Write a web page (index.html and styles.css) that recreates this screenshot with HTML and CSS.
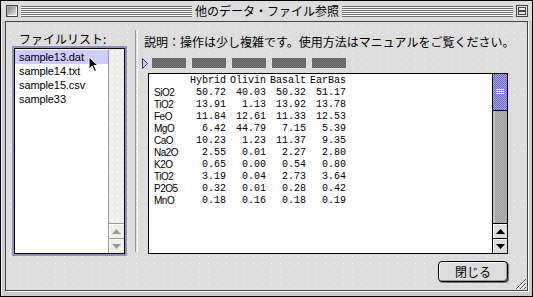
FILE: index.html
```html
<!DOCTYPE html>
<html lang="ja">
<head>
  <meta charset="UTF-8" />
  <title>他のデータ・ファイル参照</title>
  <link rel="stylesheet" href="styles.css">
</head>
<body>

<div class="window">
  <div class="titlebar">
    <span class="close-box"></span>
    <span class="stripes"></span>
    <span class="title">他のデータ・ファイル参照</span>
    <span class="stripes"></span>
    <svg class="shade-box" width="12" height="12" viewBox="0 0 12 12">
      <rect x="0.5" y="0.5" width="11" height="11" fill="#e8e8e8" stroke="#444"/>
      <rect x="2.5" y="2.5" width="7" height="3" fill="none" stroke="#444"/>
      <rect x="2.5" y="6.5" width="7" height="3" fill="none" stroke="#444"/>
    </svg>
  </div>

  <div class="content">
    <div class="main">
      <div class="files">
        <div class="label">ファイルリスト:</div>
        <div class="listbox">
          <ul class="file-list">
            <li class="selected">sample13.dat</li>
            <li>sample14.txt</li>
            <li>sample15.csv</li>
            <li>sample33</li>
          </ul>
          <div class="vscroll disabled">
            <div class="track"></div>
            <div class="arrow"><svg width="9" height="5" viewBox="0 0 9 5"><path d="M0 5 L4.5 0 L9 5 Z" fill="#999"/></svg></div>
            <div class="arrow"><svg width="9" height="5" viewBox="0 0 9 5"><path d="M0 0 L4.5 5 L9 0 Z" fill="#999"/></svg></div>
          </div>
        </div>
      </div>

      <div class="divider"></div>

      <div class="viewer">
        <p class="note">説明：操作は少し複雑です。使用方法はマニュアルをご覧ください。</p>
        <div class="col-bar">
          <svg class="marker" width="6" height="11" viewBox="0 0 6 11">
            <path d="M0.5 0.5 L5.5 5.5 L0.5 10.5 Z" fill="#ccccff" stroke="#333399"/>
          </svg>
          <span class="col-tab"></span>
          <span class="col-tab"></span>
          <span class="col-tab"></span>
          <span class="col-tab"></span>
          <span class="col-tab"></span>
        </div>
        <div class="data-box">
          <div class="data-table">
            <div class="row head"><span></span><span>Hybrid</span><span>Olivin</span><span>Basalt</span><span>EarBas</span></div>
            <div class="row"><span>SiO2</span><span>50.72</span><span>40.03</span><span>50.32</span><span>51.17</span></div>
            <div class="row"><span>TiO2</span><span>13.91</span><span>1.13</span><span>13.92</span><span>13.78</span></div>
            <div class="row"><span>FeO</span><span>11.84</span><span>12.61</span><span>11.33</span><span>12.53</span></div>
            <div class="row"><span>MgO</span><span>6.42</span><span>44.79</span><span>7.15</span><span>5.39</span></div>
            <div class="row"><span>CaO</span><span>10.23</span><span>1.23</span><span>11.37</span><span>9.35</span></div>
            <div class="row"><span>Na2O</span><span>2.55</span><span>0.01</span><span>2.27</span><span>2.80</span></div>
            <div class="row"><span>K2O</span><span>0.65</span><span>0.00</span><span>0.54</span><span>0.80</span></div>
            <div class="row"><span>TiO2</span><span>3.19</span><span>0.04</span><span>2.73</span><span>3.64</span></div>
            <div class="row"><span>P2O5</span><span>0.32</span><span>0.01</span><span>0.28</span><span>0.42</span></div>
            <div class="row"><span>MnO</span><span>0.18</span><span>0.16</span><span>0.18</span><span>0.19</span></div>
          </div>
          <div class="vscroll">
            <div class="thumb"><span class="grip"></span></div>
            <div class="track"></div>
            <div class="arrow"><svg width="9" height="5" viewBox="0 0 9 5"><path d="M0 5 L4.5 0 L9 5 Z" fill="#000"/></svg></div>
            <div class="arrow"><svg width="9" height="5" viewBox="0 0 9 5"><path d="M0 0 L4.5 5 L9 0 Z" fill="#000"/></svg></div>
          </div>
        </div>
      </div>
    </div>

    <div class="footer">
      <button class="btn">閉じる</button>
    </div>

    <svg class="grow-box" width="14" height="14" viewBox="0 0 14 14">
      <path d="M3 13 L13 3 M7 13 L13 7 M11 13 L13 11" stroke="#555" stroke-width="1"/>
      <path d="M4 13 L13 4 M8 13 L13 8" stroke="#fff" stroke-width="1"/>
    </svg>
  </div>

  <!-- mouse pointer -->
  <svg class="cursor" width="11" height="17" viewBox="0 0 11 17">
    <path d="M1 1 L1 13 L4 10 L6.5 15.5 L8.5 14.5 L6 9.5 L10 9.5 Z" fill="#000" stroke="#fff" stroke-width="1"/>
  </svg>
</div>

</body>
</html>
```

FILE: styles.css
```css
* {
  box-sizing: border-box;
}

body {
  margin: 0;
  background: #fff;
  font-family: "Liberation Sans", Arial, sans-serif;
  color: #000;
}

.window {
  position: relative;
  width: 533px;
  height: 297px;
  border: 1px solid #000;
  background: #cccccc;
  box-shadow: inset 1px 1px 0 #f4f4f4;
  padding: 0 4px 5px 4px;
  display: flex;
  flex-direction: column;
}

/* title bar */
.titlebar {
  margin: 0 -4px;
  height: 20px;
  padding: 0 4px 0 5px;
  display: flex;
  align-items: center;
  background: #dddddd;
  flex-shrink: 0;
}

.close-box {
  width: 12px;
  height: 12px;
  border: 1px solid #444;
  background: linear-gradient(135deg, #7a7a7a, #f4f4f4);
  box-shadow: inset 1px 1px 0 #aaa, inset -1px -1px 0 #fff;
  margin-right: 3px;
}

.stripes {
  flex: 1;
  height: 11px;
  background: linear-gradient(to bottom, #6e6e6e 50%, #fcfcfc 50%) 0 0 / 100% 2px repeat-y;
}

.title {
  padding: 0 3px;
  font-family: "Noto Sans CJK JP", sans-serif;
  font-size: 12px;
  line-height: 14px;
  white-space: nowrap;
}

.shade-box {
  margin-left: 3px;
  display: block;
}

/* body of window */
.content {
  position: relative;
  flex: 1;
  border: 1px solid #444;
  box-shadow: 1px 1px 0 #fff;
  background-color: #dddddd;
  background-image: radial-gradient(circle, #f6f6f6 0.6px, transparent 0.9px);
  background-size: 9px 7px;
  padding: 0 19px 0 8px;
}

.main {
  display: flex;
  align-items: flex-start;
}

.files {
  width: 111px;
  padding-top: 10px;
}

.label {
  font-family: "Noto Sans CJK JP", sans-serif;
  font-size: 12px;
  line-height: 14px;
  padding-left: 5px;
  margin-bottom: 2px;
  white-space: nowrap;
}

.listbox {
  height: 206px;
  border: 1px solid #000;
  box-shadow: 0 0 0 2px #8f8fc4;
  background: #fff;
  display: flex;
}

.file-list {
  flex: 1;
  list-style: none;
  margin: 0;
  padding: 1px 0 0;
  font-size: 11px;
}

.file-list li {
  height: 14px;
  line-height: 14px;
  padding-left: 4px;
  letter-spacing: -0.1px;
}

.file-list li.selected {
  background: #ccccff;
}

/* scrollbars */
.vscroll {
  width: 15px;
  border-left: 1px solid #000;
  display: flex;
  flex-direction: column;
}

.vscroll.disabled {
  width: 16px;
  border-left-color: #999;
  background-color: #eeeeee;
  background-image: radial-gradient(circle, #fff 0.6px, transparent 0.9px);
  background-size: 6px 6px;
}

.vscroll .track {
  flex: 1;
  background: repeating-conic-gradient(#9e9e9e 0 25%, #b4b4b4 0 50%) 0 0 / 2px 2px;
  box-shadow: inset 2px 0 0 #c4c4c4;
}

.vscroll.disabled .track {
  background: none;
  box-shadow: none;
}

.arrow {
  height: 15px;
  border-top: 1px solid #000;
  background: #dddddd;
  box-shadow: inset 1px 1px 0 #fff;
  display: flex;
  align-items: center;
  justify-content: center;
}

.vscroll.disabled .arrow {
  border-top-color: #999;
  background: #eeeeee;
}

.thumb {
  height: 37px;
  border-bottom: 1px solid #000;
  background: repeating-conic-gradient(#6c6cc4 0 25%, #a4a4ea 0 50%) 0 0 / 2px 2px;
  display: flex;
  align-items: center;
  justify-content: center;
}

.grip {
  width: 8px;
  height: 6px;
  background: linear-gradient(to bottom, #e8e8ff 50%, transparent 50%) 0 0 / 100% 2px repeat-y;
}

.divider {
  align-self: stretch;
  width: 3px;
  margin: 8px 4px 2px 10px;
  border-left: 1px solid #999;
  border-right: 1px solid #fff;
}

.viewer {
  width: 366px;
  padding-top: 13px;
}

.note {
  margin: 0;
  padding-left: 2px;
  font-family: "Noto Sans CJK JP", sans-serif;
  font-size: 12px;
  line-height: 14px;
  white-space: nowrap;
}

.col-bar {
  display: flex;
  align-items: center;
  gap: 6px;
  height: 10px;
  margin-top: 9px;
}

.marker {
  display: block;
  margin-right: -2px;
}

.col-tab {
  width: 34px;
  height: 10px;
  background: repeating-conic-gradient(#5e5e5e 0 25%, #7a7a7a 0 50%) 0 0 / 2px 2px;
}

.data-box {
  margin-top: 5px;
  margin-left: 6px;
  height: 181px;
  border: 1px solid #000;
  background: #fff;
  display: flex;
}

.data-table {
  flex: 1;
  padding: 1px 0 0 5px;
}

.row {
  display: grid;
  grid-template-columns: 32px repeat(4, 40px);
  height: 12px;
  line-height: 12px;
  font-family: "Liberation Mono", "Courier New", monospace;
  font-size: 10px;
}

.row span {
  text-align: right;
  white-space: nowrap;
}

.row span:first-child {
  text-align: left;
  font-family: "Liberation Sans", Arial, sans-serif;
  letter-spacing: -0.5px;
}

/* footer */
.footer {
  display: flex;
  justify-content: flex-end;
  padding-top: 7px;
}

.btn {
  width: 70px;
  height: 21px;
  padding: 0;
  border: 1px solid #000;
  border-radius: 4px;
  background: #dddddd;
  box-shadow: inset 1px 1px 0 #fff, inset -1px -1px 0 #999, 1px 1px 0 #777;
  font-family: "Noto Sans CJK JP", sans-serif;
  font-size: 12px;
  line-height: 18px;
  color: #000;
}

.grow-box {
  position: absolute;
  right: 0;
  bottom: 0;
}

.cursor {
  position: absolute;
  left: 87px;
  top: 55px;
}
```
